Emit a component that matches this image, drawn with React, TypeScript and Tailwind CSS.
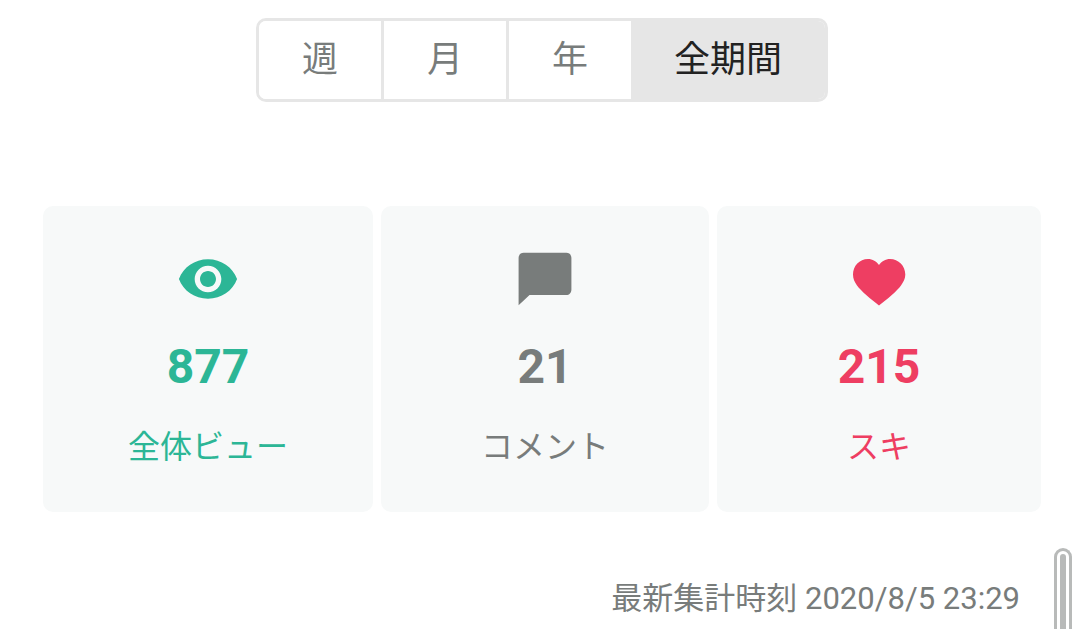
import { useState } from 'react';
import { clsx } from 'clsx';

const periods = ['週', '月', '年', '全期間'];

const EyeIcon = () => (
  <svg viewBox="0 0 24 24" className="w-16 h-16" fill="currentColor" aria-hidden="true">
    <path d="M12 4.6C7 4.6 2.73 7.61 1.1 12c1.63 4.39 5.9 7.4 10.9 7.4s9.27-3.01 10.9-7.4C21.27 7.61 17 4.6 12 4.6zM12 17c-2.76 0-5-2.24-5-5s2.24-5 5-5 5 2.24 5 5-2.24 5-5 5zm0-8c-1.66 0-3 1.34-3 3s1.34 3 3 3 3-1.34 3-3-1.34-3-3-3z" />
  </svg>
);

const CommentIcon = () => (
  <svg viewBox="0 0 24 24" className="w-16 h-16" fill="currentColor" aria-hidden="true">
    <path d="M20 2.2H4c-1.1 0-1.9.8-1.9 1.9v17.7L6.2 18H20c1.1 0 1.9-.9 1.9-2V4.1c0-1.1-.8-1.9-1.9-1.9z" />
  </svg>
);

const HeartIcon = () => (
  <svg viewBox="0 0 64 64" className="w-16 h-16" fill="currentColor" aria-hidden="true">
    <path d="M32 58.4C24 52.5 14 44 10 38.5 7.5 35 6 31.5 6 27.5 6 19 12.5 12 21 12c4.5 0 8.5 2.5 11 6 2.5-3.5 6.500-6 11-6 8.500 0 15.300 7 15.300 15.500 0 4-1.800 7.500-4.300 11C50 44 40 52.500 32 58.400z" />
  </svg>
);

const stats = [
  { label: '全体ビュー', value: 877, icon: EyeIcon, color: 'text-[#2cb696]' },
  { label: 'コメント', value: 21, icon: CommentIcon, color: 'text-[#787c7b]' },
  { label: 'スキ', value: 215, icon: HeartIcon, color: 'text-[#ee3e62]' }
];

export default function App() {
  const [period, setPeriod] = useState('全期間');

  return (
    <main className="relative min-h-screen overflow-hidden bg-white pt-[18px] pl-[43px] pr-[39px] text-[#787c7b] font-['Roboto','Noto_Sans_CJK_JP',sans-serif]">
      {/* Period switch */}
      <div className="flex justify-center">
        <div className="flex h-[84px] rounded-[10px] border-3 border-[#e6e6e6] overflow-hidden">
          {periods.map((p, idx) => (
            <button
              key={p}
              type="button"
              aria-pressed={p === period}
              onClick={() => setPeriod(p)}
              className={clsx(
                'px-[43px] text-[36px] leading-[48px] border-[#e6e6e6]',
                idx < 2 && 'border-r-3',
                p === period ? 'bg-[#e6e6e6] text-[#222222]' : 'bg-white'
              )}
            >
              {p}
            </button>
          ))}
        </div>
      </div>

      {/* Totals */}
      <section className="mt-[104px] grid grid-cols-[330fr_328fr_324fr] gap-2">
        {stats.map((s) => {
          const Icon = s.icon;
          return (
            <div
              key={s.label}
              className={clsx('flex flex-col items-center rounded-[10px] bg-[#f7f9f9] pt-[41px] pb-[45px]', s.color)}
            >
              <Icon />
              <p className="mt-7 text-[48px] leading-[56px] font-bold">{s.value}</p>
              <p className="mt-8 text-[32px] leading-[40px]">{s.label}</p>
            </div>
          );
        })}
      </section>

      <p className="mt-[67px] pr-[21px] text-right text-[31px] leading-[40px]">
        最新集計時刻 2020/8/5 23:29
      </p>

      {/* Scroll thumb */}
      <div
        aria-hidden="true"
        className="absolute right-2 top-[548px] bottom-0 w-[18px] rounded-t-full border-3 border-b-0 border-[#b8bab9] bg-white px-[3px] pt-[3px]"
      >
        <div className="h-full rounded-t-full bg-[#b8bab9]" />
      </div>
    </main>
  );
}
